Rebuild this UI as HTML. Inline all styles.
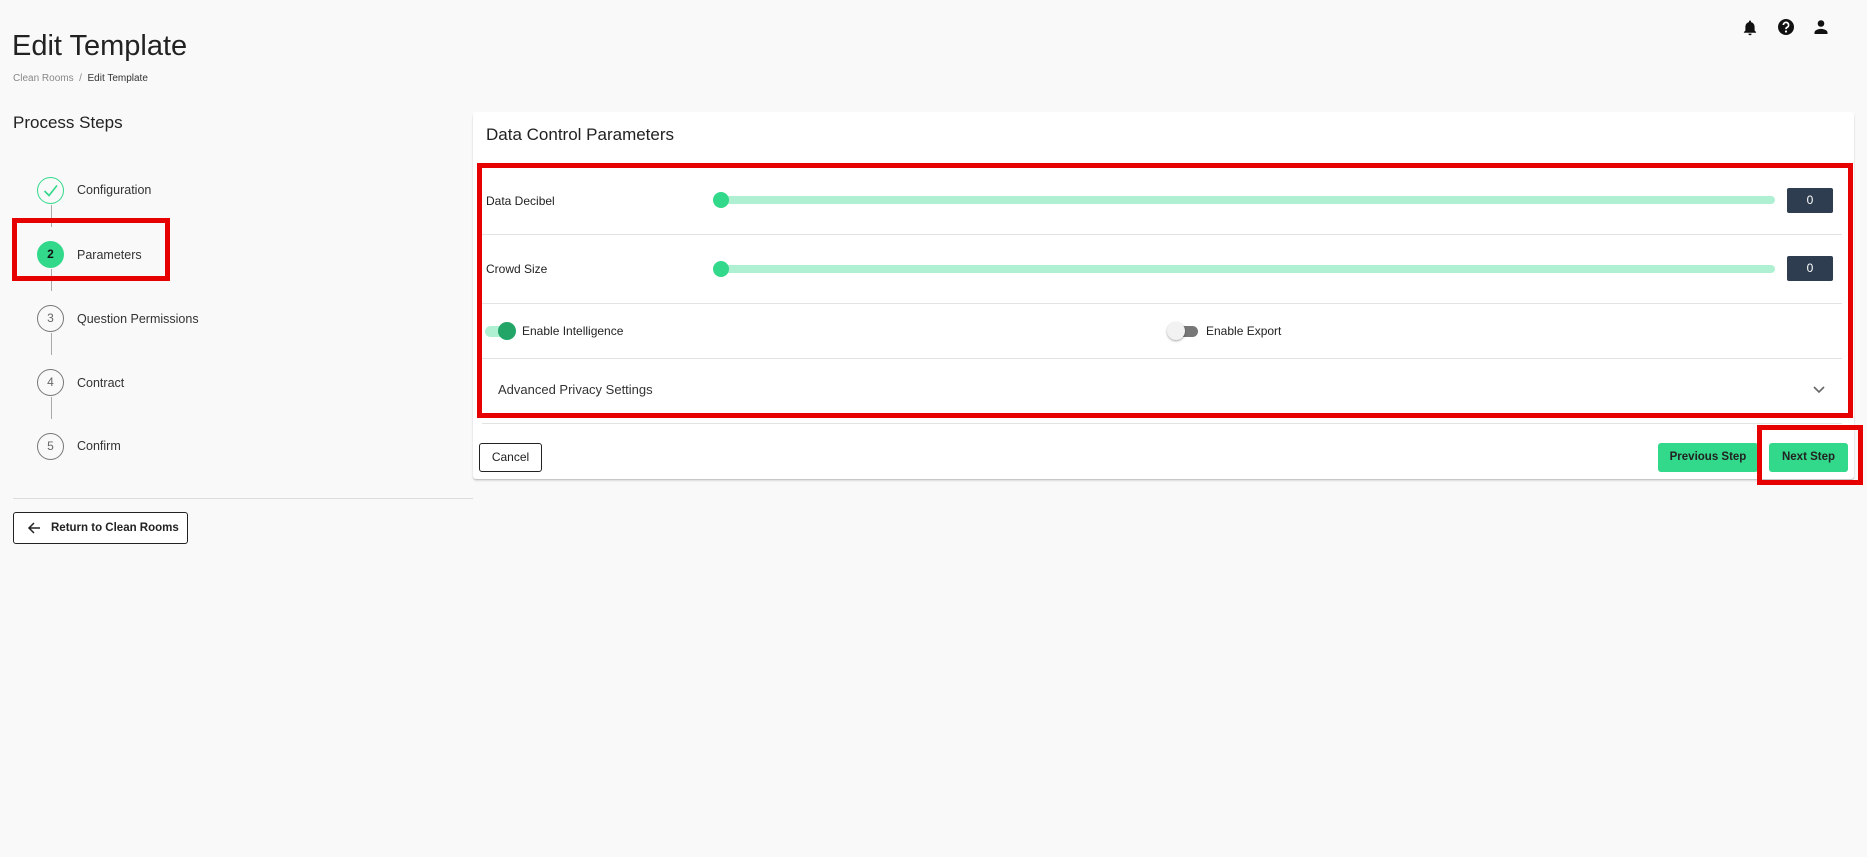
<!DOCTYPE html>
<html><head><meta charset="utf-8"><style>
*{box-sizing:border-box;margin:0;padding:0}
body{width:1867px;height:857px;background:#f9f9f9;font-family:"Liberation Sans",sans-serif;color:#222;position:relative;overflow:hidden}
.a{position:absolute}
h1{position:absolute;left:12px;top:30px;font-size:29px;font-weight:400;color:#222}
.bc{left:13px;top:73px;font-size:10px;color:#888}
.bc b{font-weight:400;color:#333}
.ps{left:13px;top:113px;font-size:17px;color:#222}
.circ{position:absolute;width:27px;height:27px;border-radius:50%;border:1px solid #777;left:37px;font-size:12px;color:#666;text-align:center;line-height:25px;background:#f9f9f9}
.vl{position:absolute;left:51px;width:1px;background:#aaa}
.sl{position:absolute;left:77px;font-size:12.5px;color:#333}
.card{left:473px;top:112px;width:1381px;height:367px;background:#fff;border-radius:3px;box-shadow:0 1px 1px rgba(0,0,0,.15),0 2px 2px rgba(0,0,0,.1)}
.hr{position:absolute;height:1px;background:#e2e2e2}
.lbl{position:absolute;font-size:12px;color:#222}
.track{position:absolute;left:720px;width:1055px;height:8px;border-radius:4px;background:#b0f0d2}
.thumb{position:absolute;left:713px;width:16px;height:16px;border-radius:50%;background:#32d98a}
.val{position:absolute;left:1787px;width:46px;height:25px;background:#2e3e50;border-radius:2px;color:#fff;font-size:12px;text-align:center;line-height:25px}
.btn{position:absolute;border-radius:3px;font-size:11.5px;text-align:center}
.red{position:absolute;border:5px solid #e60000}
</style></head><body>
<h1>Edit Template</h1>
<div class="a bc">Clean Rooms &nbsp;/&nbsp; <b>Edit Template</b></div>
<div class="a ps">Process Steps</div>

<div class="vl" style="top:205px;height:22px"></div>
<div class="vl" style="top:269px;height:22px"></div>
<div class="vl" style="top:333px;height:22px"></div>
<div class="vl" style="top:397px;height:22px"></div>
<div class="circ" style="top:177px;border-color:#32d98a"><svg width="25" height="25" viewBox="0 0 25 25"><path d="M6.5 13l4.5 4.5 8-10" fill="none" stroke="#32d98a" stroke-width="1.6"/></svg></div>
<div class="sl" style="top:183px">Configuration</div>
<div class="circ" style="top:241px;background:#32d98a;border-color:#32d98a;color:#111;font-weight:700">2</div>
<div class="sl" style="top:248px">Parameters</div>
<div class="circ" style="top:305px">3</div>
<div class="sl" style="top:312px">Question Permissions</div>
<div class="circ" style="top:369px">4</div>
<div class="sl" style="top:376px">Contract</div>
<div class="circ" style="top:433px">5</div>
<div class="sl" style="top:439px">Confirm</div>
<div class="red" style="left:12px;top:218px;width:158px;height:63px"></div>
<div class="a" style="left:13px;top:498px;width:460px;height:1px;background:#ddd"></div>
<div class="a" style="left:13px;top:512px;width:175px;height:32px;border:1px solid #222;border-radius:3px;background:#fff;font-size:11.5px;font-weight:700;line-height:30px;padding-left:37px">Return to Clean Rooms</div>
<svg class="a" style="left:27px;top:521px" width="14" height="14" viewBox="0 0 14 14"><path d="M13 7H2M7 2L2 7l5 5" fill="none" stroke="#222" stroke-width="1.5"/></svg>

<svg class="a" style="left:1742px;top:19px" width="16" height="17" viewBox="0 0 16 17"><path d="M8 1.5a1 1 0 0 1 1 1v.6c2.3.5 3.6 2.4 3.6 4.9v3.5l1.5 1.6v.7H1.9v-.7l1.5-1.6V8c0-2.5 1.3-4.4 3.6-4.9v-.6a1 1 0 0 1 1-1zM6.4 14.6h3.2a1.6 1.6 0 0 1-3.2 0z" fill="#111"/></svg>
<svg class="a" style="left:1777px;top:18px" width="18" height="18" viewBox="0 0 18 18"><circle cx="9" cy="9" r="8" fill="#111"/><path d="M6.4 7a2.6 2.6 0 1 1 3.8 2.3c-.8.4-1.2.9-1.2 1.8" fill="none" stroke="#fff" stroke-width="1.7"/><circle cx="9" cy="13.5" r="1.1" fill="#fff"/></svg>
<svg class="a" style="left:1813px;top:19px" width="16" height="16" viewBox="0 0 16 16"><circle cx="8" cy="4.5" r="3.3" fill="#111"/><path d="M1.5 15v-1.5c0-2.4 4.3-3.6 6.5-3.6s6.5 1.2 6.5 3.6V15z" fill="#111"/></svg>

<div class="a card"></div>
<div class="a" style="left:486px;top:125px;font-size:17px;color:#222">Data Control Parameters</div>

<div class="lbl" style="left:486px;top:194px">Data Decibel</div>
<div class="track" style="top:196px"></div>
<div class="thumb" style="top:192px"></div>
<div class="val" style="top:188px">0</div>
<div class="hr" style="left:482px;top:234px;width:1360px"></div>

<div class="lbl" style="left:486px;top:262px">Crowd Size</div>
<div class="track" style="top:265px"></div>
<div class="thumb" style="top:261px"></div>
<div class="val" style="top:256px">0</div>
<div class="hr" style="left:482px;top:303px;width:1360px"></div>

<div class="a" style="left:485px;top:326px;width:27px;height:11px;border-radius:6px;background:#b0f0d2"></div>
<div class="a" style="left:498px;top:322px;width:18px;height:18px;border-radius:50%;background:#22a566"></div>
<div class="lbl" style="left:522px;top:324px">Enable Intelligence</div>
<div class="a" style="left:1168px;top:326px;width:30px;height:11px;border-radius:6px;background:#777"></div>
<div class="a" style="left:1167px;top:322px;width:18px;height:18px;border-radius:50%;background:#f2f2f2;box-shadow:0 1px 2px rgba(0,0,0,.35)"></div>
<div class="lbl" style="left:1206px;top:324px">Enable Export</div>
<div class="hr" style="left:482px;top:358px;width:1360px"></div>

<div class="a" style="left:498px;top:382px;font-size:13px;color:#333">Advanced Privacy Settings</div>
<svg class="a" style="left:1812px;top:385px" width="14" height="10" viewBox="0 0 14 10"><path d="M2 2l5 5 5-5" fill="none" stroke="#666" stroke-width="1.6"/></svg>
<div class="hr" style="left:482px;top:423px;width:1360px"></div>
<div class="red" style="left:477px;top:163px;width:1376px;height:255px"></div>

<div class="btn" style="left:479px;top:443px;width:63px;height:29px;border:1px solid #222;background:#fff;line-height:27px;font-size:12px">Cancel</div>
<div class="btn" style="left:1658px;top:443px;width:100px;height:29px;background:#32d98a;line-height:29px;font-weight:700;color:#222">Previous Step</div>
<div class="btn" style="left:1769px;top:443px;width:79px;height:29px;background:#32d98a;line-height:29px;font-weight:700;color:#222">Next Step</div>
<div class="red" style="left:1757px;top:425px;width:106px;height:60px"></div>
</body></html>
